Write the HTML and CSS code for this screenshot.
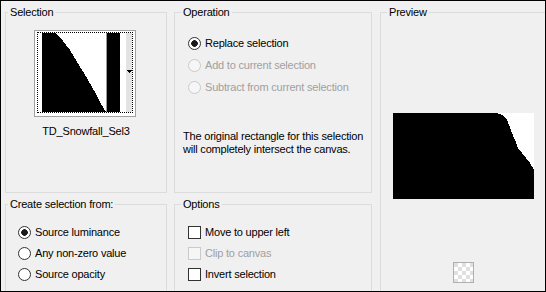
FILE: index.html
```html
<!DOCTYPE html>
<html lang="en">
<head>
  <meta charset="UTF-8">
  <meta name="viewport" content="width=device-width, initial-scale=1.0">
  <title>Load Selection</title>
  <link rel="stylesheet" href="styles.css">
</head>
<body>
  <div class="dialog">
    <fieldset class="group group-left">
      <legend>Selection</legend>
      <div class="thumb">
        <div class="thumb-inner">
          <svg width="94" height="79" viewBox="0 0 94 79" shape-rendering="crispEdges">
            <rect width="94" height="79" fill="#fff"/>
            <polygon points="4,0 18,0 25,8 32,17 38,27 44,37 49,45 54,54 58,61 62,69 65,74 68,79 4,79" fill="#000"/>
            <rect x="68" width="1" height="79" fill="#999"/>
            <rect x="69" width="13" height="79" fill="#000"/>
            <rect x="88" width="6" height="79" fill="#e3e3e3"/>
            <path d="M89 37h5v1h-5zM90 38h3v1h-3zM91 39h1v1h-1z" fill="#000"/>
          </svg>
        </div>
      </div>
      <div class="thumb-name">TD_Snowfall_Sel3</div>
    </fieldset>

    <fieldset class="group">
      <legend>Operation</legend>
      <div class="choices">
        <label class="choice"><input type="radio" name="op" checked>Replace selection</label>
        <label class="choice off"><input type="radio" name="op" disabled>Add to current selection</label>
        <label class="choice off"><input type="radio" name="op" disabled>Subtract from current selection</label>
      </div>
      <p class="note">The original rectangle for this selection<br>will completely intersect the canvas.</p>
    </fieldset>

    <fieldset class="group group-preview">
      <legend>Preview</legend>
      <svg class="preview-img" width="141" height="86" viewBox="0 0 141 86" shape-rendering="crispEdges">
        <rect width="141" height="86" fill="#000"/>
        <polygon points="104,0 141,0 141,57 137,50 133,45 129,40 125,35 122,27 119,20 117,14 114,7 109,2" fill="#fff"/>
      </svg>
      <div class="transparency"></div>
    </fieldset>

    <fieldset class="group group-left">
      <legend>Create selection from:</legend>
      <div class="choices compact">
        <label class="choice"><input type="radio" name="src" checked>Source luminance</label>
        <label class="choice"><input type="radio" name="src">Any non-zero value</label>
        <label class="choice"><input type="radio" name="src">Source opacity</label>
      </div>
    </fieldset>

    <fieldset class="group">
      <legend>Options</legend>
      <div class="choices compact">
        <label class="choice"><input type="checkbox">Move to upper left</label>
        <label class="choice off"><input type="checkbox" disabled>Clip to canvas</label>
        <label class="choice"><input type="checkbox">Invert selection</label>
      </div>
    </fieldset>
  </div>
</body>
</html>
```

FILE: styles.css
```css
body {
  margin: 0;
  font-family: "Liberation Sans", Arial, sans-serif;
  font-size: 11px;
  line-height: 13px;
  letter-spacing: -0.2px;
  color: #000;
}

.dialog {
  width: 546px;
  height: 292px;
  box-sizing: border-box;
  border: 1px solid #000;
  background-color: #f0f0f0;
  padding: 5px 0 0 4px;
  overflow: hidden;
  display: grid;
  grid-template-columns: 162px 198px 168px;
  grid-template-rows: 187px 120px;
  column-gap: 7px;
  row-gap: 5px;
}

.group {
  margin: 0;
  padding: 0;
  min-width: 0;
  border: 1px solid #dcdcdc;
}

.group legend {
  padding: 0 2px;
  margin-left: 6px;
  line-height: 13px;
}

.group-left legend {
  margin-left: 2px;
}

.group-preview {
  grid-column: 3;
  grid-row: 1 / 3;
  margin-left: 1px;
  display: flex;
  flex-direction: column;
  align-items: center;
}

/* selection thumbnail */
.thumb {
  width: 102px;
  height: 87px;
  box-sizing: border-box;
  margin: 11px 0 0 28px;
  padding: 1px 2px 2px 2px;
  border: 1px solid #a0a0a0;
  background-color: #fff;
}

.thumb-inner {
  border: 1px dotted #000;
}

.thumb-inner svg {
  display: block;
}

.thumb-name {
  margin-top: 8px;
  text-align: center;
}

/* radio and check rows */
.choices {
  padding: 13px 0 0 13px;
}

.choices.compact {
  padding-top: 11px;
}

.group-left .choices {
  padding-left: 12px;
}

.choice {
  display: flex;
  align-items: center;
  height: 22px;
}

.compact .choice {
  height: 21px;
}

.choice.off {
  color: #a0a0a0;
}

.choice input {
  appearance: none;
  flex: none;
  width: 13px;
  height: 13px;
  margin: 0 4px 0 0;
  border: 1px solid #333;
  background-color: #fff;
}

.choice input[type="radio"] {
  border-radius: 50%;
}

.choice input[type="radio"]:checked {
  background: radial-gradient(circle, #1a1a1a 0 3px, #fff 3.6px);
}

.choice input:disabled {
  border-color: #cacaca;
  background-color: #f6f6f6;
}

.note {
  margin: 32px 0 0 8px;
  white-space: nowrap;
}

/* preview */
.preview-img {
  display: block;
  margin-top: 94px;
}

.transparency {
  width: 21px;
  height: 21px;
  box-sizing: border-box;
  margin-top: 63px;
  border: 1px solid #b0b0b0;
  background-image: conic-gradient(#fff 25%, #e0e0e0 0 50%, #fff 0 75%, #e0e0e0 0);
  background-size: 8px 8px;
}
```
